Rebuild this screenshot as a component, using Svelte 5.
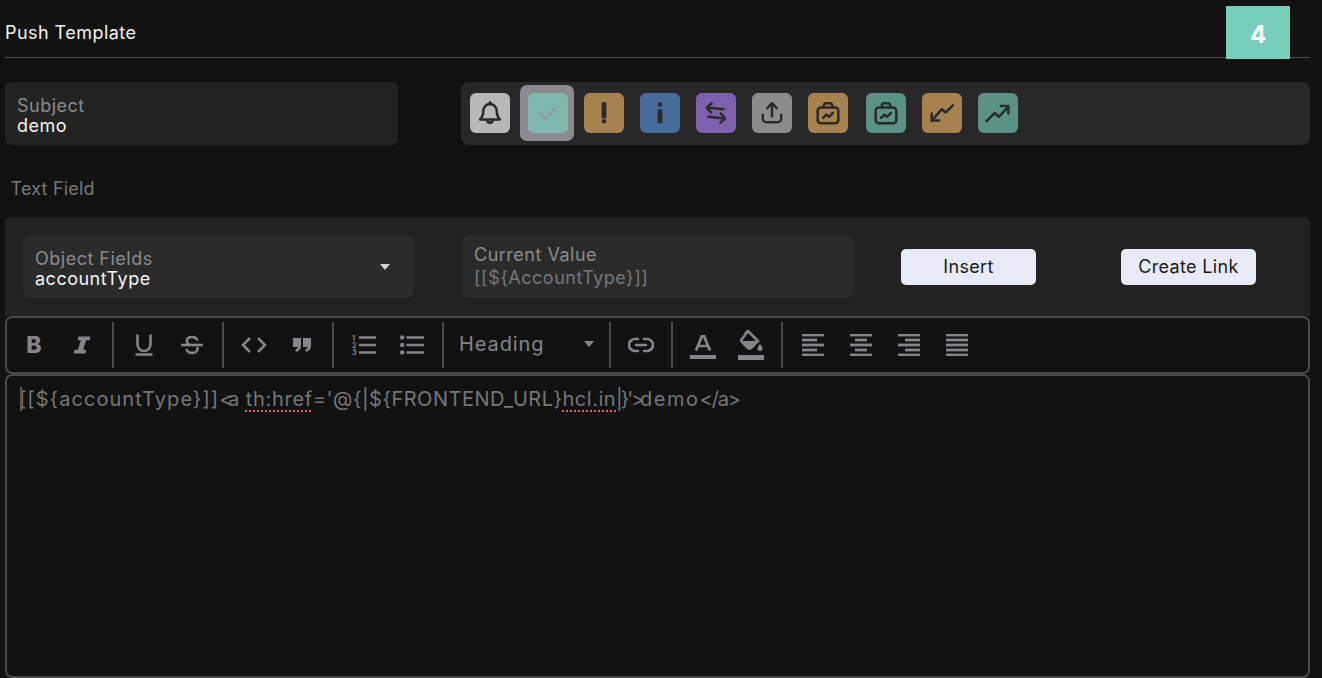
<script>
  const kinds = [
    { color: '#b8b8b8', icon: 'bell' },
    { color: '#7fb8ac', icon: 'check', selected: true, nudge: true },
    { color: '#a5824e', icon: 'alert' },
    { color: '#466b9b', icon: 'info' },
    { color: '#7d60ae', icon: 'swap' },
    { color: '#8c8c8c', icon: 'upload' },
    { color: '#a5824e', icon: 'case' },
    { color: '#5a9286', icon: 'case', nudge: true },
    { color: '#a5824e', icon: 'down' },
    { color: '#5a9286', icon: 'up' }
  ]
  const aligns = [
    [[0, 22], [0, 15], [0, 22], [0, 15], [0, 22]],
    [[0, 22], [5, 17], [0, 22], [5, 17], [0, 22]],
    [[0, 22], [7, 22], [0, 22], [7, 22], [0, 22]],
    [[0, 22], [0, 22], [0, 22], [0, 22], [0, 22]]
  ]
</script>

<main>
  <header>
    <h1>Push Template</h1>
    <span class="step">4</span>
  </header>

  <section class="top">
    <div class="field">
      <label for="subject">Subject</label>
      <span id="subject" class="value">demo</span>
    </div>
    <div class="kinds">
      {#each kinds as k}
        <button class="kind" class:selected={k.selected} class:nudge={k.nudge} aria-label={k.icon}>
          <span class="swatch" style="background:{k.color}">
            <svg viewBox="0 0 24 24" width="26" height="26" fill="none" stroke="currentColor" stroke-width="2.300" stroke-linecap="round" stroke-linejoin="round">
              {#if k.icon === 'bell'}
                <path d="M5.800 10a6.200 6.200 0 0 1 12.400 0c0 4 .8 6 3 8H2.800c2.200-2 3-4 3-8z" /><path d="M9.500 18.500a2.500 2.500 0 0 0 5 0" /><path d="M12 2v1.800" />
              {:else if k.icon === 'check'}
                <path d="M5 12.500l4.500 4.500 9.500-10" stroke-width="2.500" />
              {:else if k.icon === 'alert'}
                <path d="M12 2.100v14.800" stroke-width="4.400" stroke-linecap="butt" /><circle cx="12" cy="19.600" r="2.100" fill="currentColor" stroke="none" />
              {:else if k.icon === 'info'}
                <circle cx="12" cy="4.100" r="2.100" fill="currentColor" stroke="none" /><path d="M12 8.600v12.900" stroke-width="4.400" stroke-linecap="butt" />
              {:else if k.icon === 'swap'}
                <path d="M19 8.500L3.500 7M8 3l-4.500 4L7.500 11.500" /><path d="M5 15.500l15.500 1.500M16.500 12.500l4 4.500-4.500 4" />
              {:else if k.icon === 'upload'}
                <path d="M12 15V3M7.500 7.500L12 3l4.500 4.500" /><path d="M3.500 13.500v3.500a3.500 3.500 0 0 0 3.500 3.500h10a3.500 3.500 0 0 0 3.500-3.500v-3.500" />
              {:else if k.icon === 'case'}
                <rect x="2.500" y="7" width="19" height="14.500" rx="2.800" /><path d="M8 7V5.500A2.500 2.500 0 0 1 10.500 3h3A2.500 2.500 0 0 1 16 5.500V7" /><path d="M7.500 16.500l3-3 2.500 2 3.500-3.500" />
              {:else if k.icon === 'down'}
                <path d="M22 5l-6.500 6.500-3.500-3L2.500 19" /><path d="M2.500 12.500V19H9.500" />
              {:else}
                <path d="M1.500 19.500l7.500-7.500 4 3.500L21.500 6" /><path d="M14.500 5.500h7V12.500" />
              {/if}
            </svg>
          </span>
        </button>
      {/each}
    </div>
  </section>

  <p class="section-label">Text Field</p>

  <section class="tools">
    <div class="field object">
      <label for="obj">Object Fields</label>
      <span id="obj" class="value">accountType</span>
      <i class="caret"></i>
    </div>
    <div class="field current">
      <label for="cur">Current Value</label>
      <span id="cur" class="value dim">[[${'{'}AccountType}]]</span>
    </div>
    <button class="action insert">Insert</button>
    <button class="action link">Create Link</button>
  </section>

  <div class="toolbar">
    <span class="tb"><b class="bold">B</b></span>
    <span class="tb"><svg viewBox="0 0 20 20" width="24" height="24"><path d="M7 3h10l-.6 3h-3L11 14h2.400l-.6 3H3l.6-3h3L9 6H6.400z" fill="currentColor" /></svg></span>
    <i class="sep"></i>
    <span class="tb"><svg viewBox="0 0 20 22" width="20" height="22" fill="none" stroke="currentColor" stroke-width="2.600"><path d="M3.500 1v10a6.500 6.500 0 0 0 13 0V1" transform="translate(0 -.5)" /><path d="M1.500 20.500h17" /></svg></span>
    <span class="tb"><svg viewBox="0 0 24 24" width="24" height="24" fill="none" stroke="currentColor" stroke-width="2.600"><path d="M17.500 7.500C16.500 5 14.500 4 12 4 9 4 6.800 5.500 6.800 8c0 1.500 1 2.500 2.200 3.500" /><path d="M1 12h22" /><path d="M6.500 16c.8 2.800 3 4 5.500 4 3 0 5.500-1.500 5.500-4.200 0-.6-.1-1.200-.4-1.800" /></svg></span>
    <i class="sep"></i>
    <span class="tb"><svg viewBox="0 0 26 18" width="26" height="18" fill="none" stroke="currentColor" stroke-width="2.500"><path d="M9 2L2 9l7 7M17 2l7 7-7 7" /></svg></span>
    <span class="tb"><svg viewBox="0 0 20 16" width="20" height="16"><path d="M1 1h8v8c0 3-1.500 5-5 6l-1-2c1.500-.6 2.300-1.600 2.500-3H1zM11 1h8v8c0 3-1.500 5-5 6l-1-2c1.500-.6 2.300-1.600 2.500-3H11z" fill="currentColor" /></svg></span>
    <i class="sep"></i>
    <span class="tb"><svg viewBox="0 0 26 22" width="26" height="22"><g fill="none" stroke="currentColor" stroke-width="2.400"><path d="M8 3.500h17M8 11h17M8 18.500h17" /></g><text x="1" y="6.500" class="num">1</text><text x="1" y="13.500" class="num">2</text><text x="1" y="21" class="num">3</text></svg></span>
    <span class="tb"><svg viewBox="0 0 24 20" width="24" height="20"><g fill="none" stroke="currentColor" stroke-width="2.400"><path d="M6.500 2.500H24M6.500 10H24M6.500 17.500H24" /></g><g fill="currentColor"><circle cx="2.200" cy="2.500" r="2.200" /><circle cx="2.200" cy="10" r="2.200" /><circle cx="2.200" cy="17.500" r="2.200" /></g></svg></span>
    <i class="sep"></i>
    <span class="heading">Heading<i class="caret small"></i></span>
    <i class="sep"></i>
    <span class="tb"><svg viewBox="0 0 26 16" width="26" height="16" fill="none" stroke="currentColor" stroke-width="2.600" stroke-linecap="round"><path d="M10 2H7a6 6 0 0 0 0 12h3M16 2h3a6 6 0 0 1 0 12h-3M8 8h10" /></svg></span>
    <i class="sep"></i>
    <span class="tb"><svg viewBox="0 0 26 28" width="26" height="28"><path d="M6 19.500L11.800 5.500h2.400L20 19.500" fill="none" stroke="currentColor" stroke-width="2.800" /><path d="M8.500 15h9" stroke="currentColor" stroke-width="2.400" /><rect y="24" width="26" height="4.500" fill="currentColor" /></svg></span>
    <span class="tb"><svg viewBox="0 0 26 30" width="26" height="30"><path d="M10 1l10 10-7 7a2 2 0 0 1-3 0l-6-6a2 2 0 0 1 0-3z M7 4l3-3" fill="none" stroke="currentColor" stroke-width="2.600" /><path d="M5 11h14l-6.500 6.500a1.500 1.500 0 0 1-2 0z" fill="currentColor" /><path d="M22 14c1.500 2 2.500 3.200 2.500 4.500a2.500 2.500 0 0 1-5 0c0-1.300 1-2.500 2.500-4.500z" fill="currentColor" /><rect y="25" width="26" height="5" fill="currentColor" /></svg></span>
    <i class="sep"></i>
    {#each aligns as rows}
      <span class="tb"><svg viewBox="0 0 24 22" width="24" height="22" fill="none" stroke="currentColor" stroke-width="2.800">
        {#each rows as r, i}
          <path d="M{r[0] + 1} {i * 5 + 1}H{r[1] + 1}" />
        {/each}
      </svg></span>
    {/each}
  </div>

  <div class="editor">
    <p><i class="cursor"></i><span class="wide">[[${'{'}accountType}]]</span><span class="squeeze">&lt;</span>a <u class="attr">th:href</u>='@{'{'}|${'{'}FRONTEND_URL}<u>hcl.in</u><span class="flat">|}'</span><span class="squeeze">&gt;</span><span class="wider">demo</span><span class="tight">&lt;/a&gt;</span></p>
  </div>
</main>

<style>
  :global(body) {
    background: #121212;
    overflow: hidden;
  }

  main {
    height: 678px;
    box-sizing: border-box;
    padding: 0 12px 0 5px;
    display: flex;
    flex-direction: column;
    font-family: Inter, "Liberation Sans", sans-serif;
    color: #8b8b8f;
  }

  header {
    position: relative;
    height: 49px;
    flex: none;
    border-bottom: 1px solid #4d4d4d;
    display: flex;
    align-items: center;
    padding-top: 8px;
  }

  h1 {
    margin: 0;
    font-size: 18px;
    font-weight: 400;
    letter-spacing: 0.45px;
    color: #f4f4f4;
  }

  .step {
    position: absolute;
    right: 20px;
    top: 6px;
    width: 64px;
    height: 53px;
    box-sizing: border-box;
    padding-top: 3px;
    display: flex;
    align-items: center;
    justify-content: center;
    background: #76cdb9;
    color: #fff;
    font-size: 24px;
    font-weight: 700;
  }

  .top {
    display: grid;
    grid-template-columns: 393px 1fr;
    gap: 63px;
    margin-top: 24px;
    flex: none;
  }

  .field {
    position: relative;
    height: 63px;
    box-sizing: border-box;
    background: #232323;
    border-radius: 6px;
    padding: 14px 12px 0;
    display: flex;
    flex-direction: column;
    font-size: 18px;
    line-height: 20px;
    letter-spacing: 0.5px;
  }

  .value {
    color: #f4f4f4;
  }

  .value.dim {
    color: #77777b;
    margin-top: 3px;
  }

  .kinds {
    height: 63px;
    box-sizing: border-box;
    background: #282828;
    border-radius: 8px;
    display: flex;
    align-items: flex-start;
    gap: 16px;
    padding: 11px 0 0 9px;
  }

  .kind {
    width: 40px;
    height: 40px;
    flex: none;
    padding: 0;
    border: 0;
    background: none;
    border-radius: 7px;
    color: #2a2a2a;
  }

  .kind.nudge {
    margin-left: 2px;
  }

  .kind.selected {
    width: 54px;
    height: 56px;
    margin: -8px -6px -8px -6px;
    padding: 8px 6px 8px 8px;
    background: #8b8b8f;
    color: #8f9ca0;
  }

  .swatch {
    width: 40px;
    height: 40px;
    border-radius: 6px;
    display: grid;
    place-items: center;
  }

  .section-label {
    margin: 34px 0 0 5.500px;
    height: 38px;
    font-size: 18px;
    line-height: 20px;
    letter-spacing: 0.2px;
    color: #77777b;
    flex: none;
  }

  .tools {
    height: 99px;
    box-sizing: border-box;
    flex: none;
    background: #222;
    border-radius: 6px 6px 0 0;
    padding: 18px 0 18px 18px;
    display: flex;
    align-items: flex-start;
  }

  .object,
  .current {
    width: 391px;
    background: #2b2b2b;
  }

  .current {
    margin-left: 48px;
    padding-top: 10px;
  }

  .caret {
    position: absolute;
    right: 24px;
    top: 29px;
    width: 0;
    height: 0;
    border: 5px solid transparent;
    border-top: 6px solid #d4d4d4;
    border-bottom: 0;
  }

  .action {
    width: 135px;
    height: 36px;
    margin-top: 14px;
    padding: 0 0 1px;
    border: 0;
    border-radius: 5px;
    background: #e8eaf6;
    color: #1a1a1a;
    font: 400 18px Inter, "Liberation Sans", sans-serif;
    letter-spacing: 0.35px;
  }

  .insert {
    margin-left: 48px;
  }

  .link {
    margin-left: 85px;
  }

  .toolbar {
    height: 58px;
    box-sizing: border-box;
    flex: none;
    border: 2px solid #4a4a4d;
    border-radius: 7px;
    display: flex;
    align-items: center;
    padding-left: 3px;
    color: #85858a;
  }

  .tb {
    width: 48px;
    height: 100%;
    flex: none;
    display: flex;
    align-items: center;
    justify-content: center;
  }

  .bold {
    font-size: 23px;
    font-weight: 800;
  }

  .num {
    font-size: 7px;
    font-weight: 700;
    fill: currentColor;
  }

  .sep {
    width: 2px;
    height: 46px;
    margin: 0 6px;
    flex: none;
    background: #4a4a4d;
  }

  .heading {
    position: relative;
    width: 153px;
    flex: none;
    box-sizing: border-box;
    padding: 0 0 2px 9px;
    font-size: 20px;
    letter-spacing: 0.9px;
  }

  .caret.small {
    right: 9px;
    top: 9px;
    border-top-color: #85858a;
  }

  .editor {
    flex: 1;
    border: 2px solid #4a4a4d;
    border-radius: 7px;
    padding: 0 12px;
    font-size: 20px;
    letter-spacing: 0.5px;
    color: #77777b;
  }

  .editor p {
    position: relative;
    margin: 11px 0 0;
    line-height: 24px;
  }

  .editor u {
    text-decoration: underline dotted #e0605a 2px;
    text-underline-offset: 4px;
  }

  /* the original's editor font has other widths, these keep the runs in line */
  .wide {
    letter-spacing: 1.05px;
  }

  .attr {
    letter-spacing: 0.7px;
  }

  .wider {
    letter-spacing: 1.55px;
  }

  .flat {
    letter-spacing: -2px;
  }

  .tight {
    letter-spacing: -1.2px;
  }

  .squeeze {
    letter-spacing: -4.5px;
  }

  .cursor {
    position: absolute;
    left: 1px;
    top: 0;
    width: 2px;
    height: 24px;
    background: #55555a;
  }
</style>
